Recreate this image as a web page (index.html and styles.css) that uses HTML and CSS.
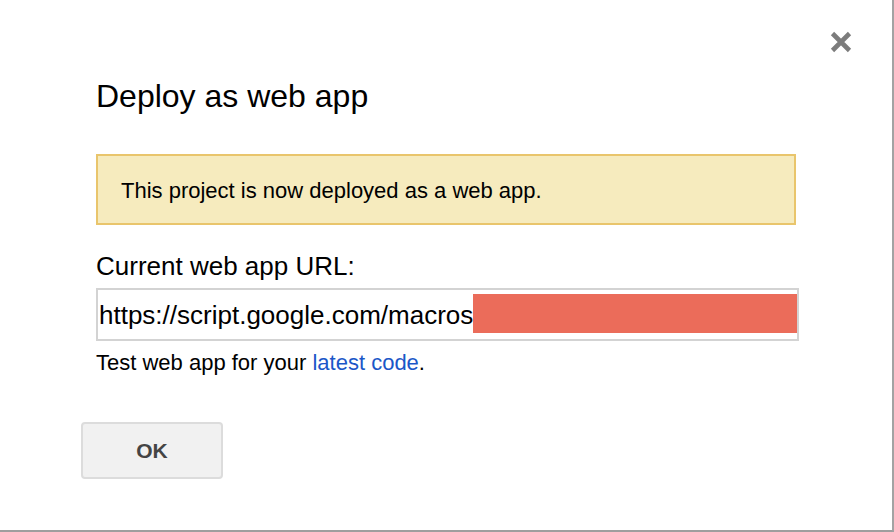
FILE: index.html
```html
<!DOCTYPE html>
<html>
<head>
<meta charset="utf-8">
<link rel="stylesheet" href="styles.css">
</head>
<body>
<div class="dialog">
  <button class="close" aria-label="Close">
    <svg width="24" height="24" viewBox="0 0 24 24"><path d="M3.5 3.5 L20.5 20.5 M20.5 3.5 L3.5 20.5" stroke="#7c7c7c" stroke-width="4.6" stroke-linecap="butt" fill="none"/></svg>
  </button>
  <h1 class="title">Deploy as web app</h1>
  <div class="notice">This project is now deployed as a web app.</div>
  <div class="label">Current web app URL:</div>
  <div class="url-field">
    <span class="url-text">https://script.google.com/macros</span>
    <span class="redacted"></span>
  </div>
  <div class="hint">Test web app for your <a class="link" href="#">latest code</a>.</div>
  <div class="actions">
    <button class="ok">OK</button>
  </div>
</div>
</body>
</html>
```
FILE: styles.css
```css
html, body {
  margin: 0;
  padding: 0;
  background: #ffffff;
}
body {
  font-family: "Liberation Sans", Arial, sans-serif;
  color: #000;
}
.dialog {
  position: relative;
  box-sizing: border-box;
  width: 894px;
  height: 532px;
  border-right: 2px solid #a3a3a3;
  border-bottom: 2px solid #9e9e9e;
  padding: 78px 0 0 96px;
  display: flex;
  flex-direction: column;
  align-items: flex-start;
}
.close {
  position: absolute;
  left: 829px;
  top: 30px;
  width: 24px;
  height: 24px;
  padding: 0;
  border: 0;
  background: transparent;
  filter: blur(0.5px);
}
.close svg { display: block; }
.title {
  margin: 0;
  font-size: 32px;
  line-height: 36px;
  font-weight: normal;
}
.notice {
  margin-top: 40px;
  box-sizing: border-box;
  width: 700px;
  padding: 22px 23px 20px;
  background: #f6ebbe;
  border: 2px solid #e9c56c;
  font-size: 22px;
  line-height: 25px;
}
.label {
  margin-top: 26px;
  font-size: 26px;
  line-height: 30px;
}
.url-field {
  margin-top: 7px;
  box-sizing: border-box;
  width: 703px;
  height: 53px;
  border: 2px solid #d3d3d3;
  padding: 4px 0 6px 1px;
  display: flex;
  align-items: stretch;
}
.url-text {
  font-size: 26px;
  line-height: 35px;
  padding-top: 4px;
  white-space: nowrap;
}
.redacted {
  flex: 1;
  background: #eb6c5a;
}
.hint {
  margin-top: 9px;
  font-size: 22px;
  line-height: 25px;
}
.link {
  color: #1b57c8;
  text-decoration: none;
}
.actions {
  margin-top: 47px;
  margin-left: -15px;
}
.ok {
  box-sizing: border-box;
  width: 142px;
  height: 57px;
  background: #f1f1f1;
  border: 2px solid #dcdcdc;
  border-radius: 4px;
  font-family: "Liberation Sans", Arial, sans-serif;
  font-weight: bold;
  font-size: 21px;
  color: #444;
  padding: 0;
}
```
